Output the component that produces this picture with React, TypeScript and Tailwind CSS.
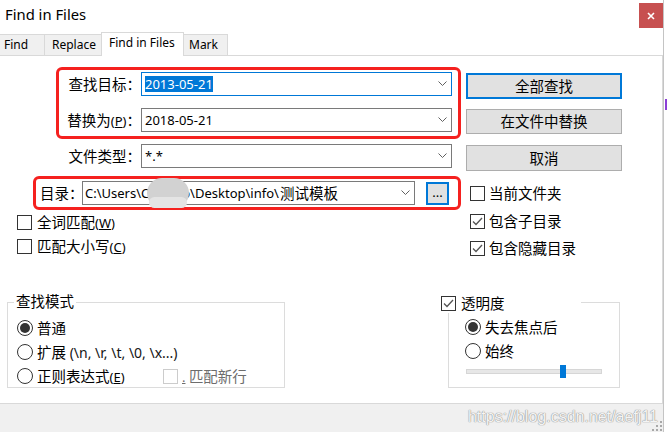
import React from "react";

const L = ({ children, className = "" }: { children: React.ReactNode; className?: string }) => (
  <span className={"text-[13px] " + className}>{children}</span>
);

const Chevron = () => (
  <svg width="9" height="6" viewBox="0 0 9 6" className="shrink-0 ml-auto">
    <polyline points="0.5,0.5 4.5,4.5 8.5,0.5" fill="none" stroke="#606060" strokeWidth="1" />
  </svg>
);

const Check = ({ checked = false, disabled = false }: { checked?: boolean; disabled?: boolean }) => (
  <div
    className={
      "w-[15px] h-[15px] border bg-white flex items-center justify-center shrink-0 " +
      (disabled ? "border-[#cccccc]" : "border-[#333333]")
    }
  >
    {checked && (
      <svg width="11" height="9" viewBox="0 0 11 9">
        <polyline points="1,4.5 4,7.5 10,1" fill="none" stroke="#555555" strokeWidth="1.3" />
      </svg>
    )}
  </div>
);

const Radio = ({ on = false }: { on?: boolean }) => (
  <div className="w-[16px] h-[16px] rounded-full border border-[#333333] bg-white flex items-center justify-center shrink-0">
    {on && <div className="w-[10px] h-[10px] rounded-full bg-[#333333]" />}
  </div>
);

const Btn = ({ children, def = false, className = "" }: { children: React.ReactNode; def?: boolean; className?: string }) => (
  <div
    className={
      "flex items-center justify-center bg-[#e1e1e1] " +
      (def ? "border-2 border-[#0078d7] " : "border border-[#adadad] ") +
      className
    }
  >
    {children}
  </div>
);

export default function App() {
  return (
    <div className="w-[667px] h-[432px] flex bg-white overflow-hidden font-['Noto_Sans','Noto_Sans_CJK_SC',sans-serif] text-[14.5px] text-black leading-none">
      {/* main window */}
      <div className="w-[664px] h-[432px] flex flex-col border-r border-[#c4c4c4]">
        {/* title bar */}
        <div className="h-[32px] flex items-start shrink-0">
          <div className="pl-[5px] pt-[4px] leading-[20px] text-[14.8px]">Find in Files</div>
          <div className="ml-auto mt-[3px] w-[24px] h-[25px] bg-[#c75050] flex items-center justify-center">
            <svg width="8" height="8" viewBox="0 0 8 8">
              <path d="M1 1 L7 7 M7 1 L1 7" stroke="#ffffff" strokeWidth="1.6" />
            </svg>
          </div>
        </div>

        {/* tabs */}
        <div className="h-[23px] flex items-end shrink-0 text-[12px]">
          <div className="w-[45px] h-[21px] bg-[#f0f0f0] border-t border-r border-[#d9d9d9] flex items-center pl-[4px]">Find</div>
          <div className="w-[56px] h-[21px] bg-[#f0f0f0] border-t border-[#d9d9d9] flex items-center pl-[7px]">Replace</div>
          <div className="w-[83px] h-[24px] -mb-[1px] relative z-10 bg-white border-t border-l border-r border-[#d9d9d9] flex items-start pt-[4px] pl-[7px]">
            Find in Files
          </div>
          <div className="w-[44px] h-[21px] bg-[#f0f0f0] border-t border-r border-[#d9d9d9] flex items-center pl-[5px]">Mark</div>
        </div>

        {/* panel */}
        <div className="w-[663px] h-[349px] shrink-0 border-t border-r border-b border-[#d9d9d9] bg-white flex flex-col">
          <div className="flex items-start">
            {/* left column */}
            <div className="w-[461px] flex flex-col">
              <div className="mt-[11px] ml-[56px] w-[405px] h-[72px] border-[3px] border-[#f5211f] rounded-[6px] flex flex-col pt-[2px] gap-[12px]">
                <div className="flex items-center h-[24px]">
                  <div className="w-[82px] text-right whitespace-nowrap">查找目标：</div>
                  <div className="w-[311px] h-[24px] border border-[#0078d7] bg-white flex items-center pl-[3px] pr-[4px]">
                    <span className="text-[13px] bg-[#0078d7] text-white leading-[16px]">2013-05-21</span>
                    <Chevron />
                  </div>
                </div>
                <div className="flex items-center h-[24px]">
                  <div className="w-[82px] text-right whitespace-nowrap">
                    替换为<L>(<span className="underline">P</span>)</L>：
                  </div>
                  <div className="w-[311px] h-[24px] border border-[#7a7a7a] bg-white flex items-center pl-[3px] pr-[4px]">
                    <span className="text-[13px]">2018-05-21</span>
                    <Chevron />
                  </div>
                </div>
              </div>

              <div className="mt-[5px] ml-[59px] flex items-center h-[24px]">
                <div className="w-[82px] text-right whitespace-nowrap">文件类型：</div>
                <div className="w-[311px] h-[24px] border border-[#7a7a7a] bg-white flex items-center pl-[3px] pr-[4px]">
                  <span className="text-[13px]">*.*</span>
                  <Chevron />
                </div>
              </div>

              <div className="mt-[8px] ml-[33px] w-[428px] h-[34px] border-[3px] border-[#f5211f] rounded-[6px] flex items-center pl-[4px]">
                <div className="w-[42px] whitespace-nowrap">目录：</div>
                <div className="w-[333px] h-[24px] border border-[#7a7a7a] bg-white flex items-center pl-[2px] pr-[4px] relative">
                  <span className="whitespace-nowrap text-[13px]">C:\Users\C</span>
                  <span className="w-[33px] shrink-0" />
                  <span className="whitespace-nowrap text-[13px]">o\Desktop\info\</span>
                  <span className="whitespace-nowrap font-['Noto_Sans_CJK_SC',sans-serif] text-[14.5px] pl-[1px]">测试模板</span>
                  <Chevron />
                  <div className="absolute left-[64px] -top-[4px] w-[42px] h-[30px] rounded-[16px] bg-[#d2d2d2]" />
                  <div className="absolute left-[66px] top-[15px] w-[38px] h-[11px] rounded-[8px] bg-[#e4e4e4]" />
                </div>
                <Btn def className="ml-[11px] w-[23px] h-[23px]">
                  <span className="text-[13px] pb-[2px]">...</span>
                </Btn>
              </div>

              <div className="mt-[5px] ml-[17px] flex items-center gap-[5px] h-[15px]">
                <Check />
                <span>
                  全词匹配<L>(<span className="underline">W</span>)</L>
                </span>
              </div>
              <div className="mt-[9px] ml-[17px] flex items-center gap-[5px] h-[15px]">
                <Check />
                <span>
                  匹配大小写<L>(<span className="underline">C</span>)</L>
                </span>
              </div>
            </div>

            {/* right column */}
            <div className="flex flex-col pl-[5px]">
              <Btn def className="mt-[17px] w-[156px] h-[26px]">全部查找</Btn>
              <Btn className="mt-[10px] w-[156px] h-[25px]">在文件中替换</Btn>
              <Btn className="mt-[11px] w-[156px] h-[26px]">取消</Btn>
              <div className="mt-[15px] ml-[4px] flex items-center gap-[4px] h-[15px]">
                <Check />
                <span>当前文件夹</span>
              </div>
              <div className="mt-[13px] ml-[4px] flex items-center gap-[4px] h-[15px]">
                <Check checked />
                <span>包含子目录</span>
              </div>
              <div className="mt-[12px] ml-[4px] flex items-center gap-[4px] h-[15px]">
                <Check checked />
                <span>包含隐藏目录</span>
              </div>
            </div>
          </div>

          {/* groups */}
          <div className="mt-[46px] flex items-start">
            <div className="ml-[7px] w-[278px] h-[86px] border border-[#dcdcdc] relative flex flex-col pt-[17px] pl-[9px] gap-[8px]">
              <div className="absolute left-[6px] -top-[12px] h-[20px] bg-white px-[2px] flex items-center">查找模式</div>
              <div className="flex items-center gap-[4px] h-[16px]">
                <Radio on />
                <span>普通</span>
              </div>
              <div className="flex items-center gap-[4px] h-[16px]">
                <Radio />
                <span className="whitespace-nowrap">
                  扩展<span className="text-[14px] text-[#141414]"> (\n, \r, \t, \0, \x...)</span>
                </span>
              </div>
              <div className="flex items-center gap-[4px] h-[16px]">
                <Radio />
                <span className="w-[122px] whitespace-nowrap">
                  正则表达式<L>(<span className="underline">E</span>)</L>
                </span>
                <Check disabled />
                <span className="text-[#6d6d6d] whitespace-nowrap">
                  <L className="underline">.</L>
                  <L> </L>匹配新行
                </span>
              </div>
            </div>

            <div className="ml-[163px] w-[172px] h-[86px] border border-[#dcdcdc] relative flex flex-col pt-[16px] pl-[16px] gap-[8px]">
              <div className="absolute -left-[8px] -top-[10px] w-[140px] h-[20px] bg-white flex items-center gap-[5px]">
                <Check checked />
                <span>透明度</span>
              </div>
              <div className="flex items-center gap-[4px] h-[16px]">
                <Radio on />
                <span>失去焦点后</span>
              </div>
              <div className="flex items-center gap-[4px] h-[16px]">
                <Radio />
                <span>始终</span>
              </div>
              <div className="-mt-[2px] ml-[1px] w-[137px] h-[13px] relative flex items-center">
                <div className="w-[136px] h-[5px] bg-[#e7e7e7] border border-[#d6d6d6]" />
                <div className="absolute left-[94px] top-0 w-[6px] h-[13px] bg-[#0078d7]" />
              </div>
            </div>
          </div>
        </div>

        {/* bottom strip */}
        <div className="flex-1 bg-[#f0f0f0] flex items-start justify-end relative">
          <span className="mt-[3px] mr-[5px] font-['Liberation_Sans',sans-serif] text-[16px] leading-[20px] text-[#f4f4f4] [text-shadow:0_0_1px_#8a8a8a,0_0_1px_#8a8a8a]">
            https://blog.csdn.net/aefj11
          </span>
          <svg width="11" height="11" viewBox="0 0 11 11" className="absolute right-0 bottom-0">
            <rect x="8" y="0" width="2" height="2" fill="#a8a8a8" />
            <rect x="4" y="4" width="2" height="2" fill="#a8a8a8" />
            <rect x="8" y="4" width="2" height="2" fill="#a8a8a8" />
            <rect x="0" y="8" width="2" height="2" fill="#a8a8a8" />
            <rect x="4" y="8" width="2" height="2" fill="#a8a8a8" />
            <rect x="8" y="8" width="2" height="2" fill="#a8a8a8" />
          </svg>
        </div>
      </div>

      {/* right strip outside window */}
      <div className="w-[3px] flex flex-col">
        <div className="mt-[99px] ml-[1px] w-[2px] h-[11px] bg-[#8b3fd6]" />
      </div>
    </div>
  );
}
